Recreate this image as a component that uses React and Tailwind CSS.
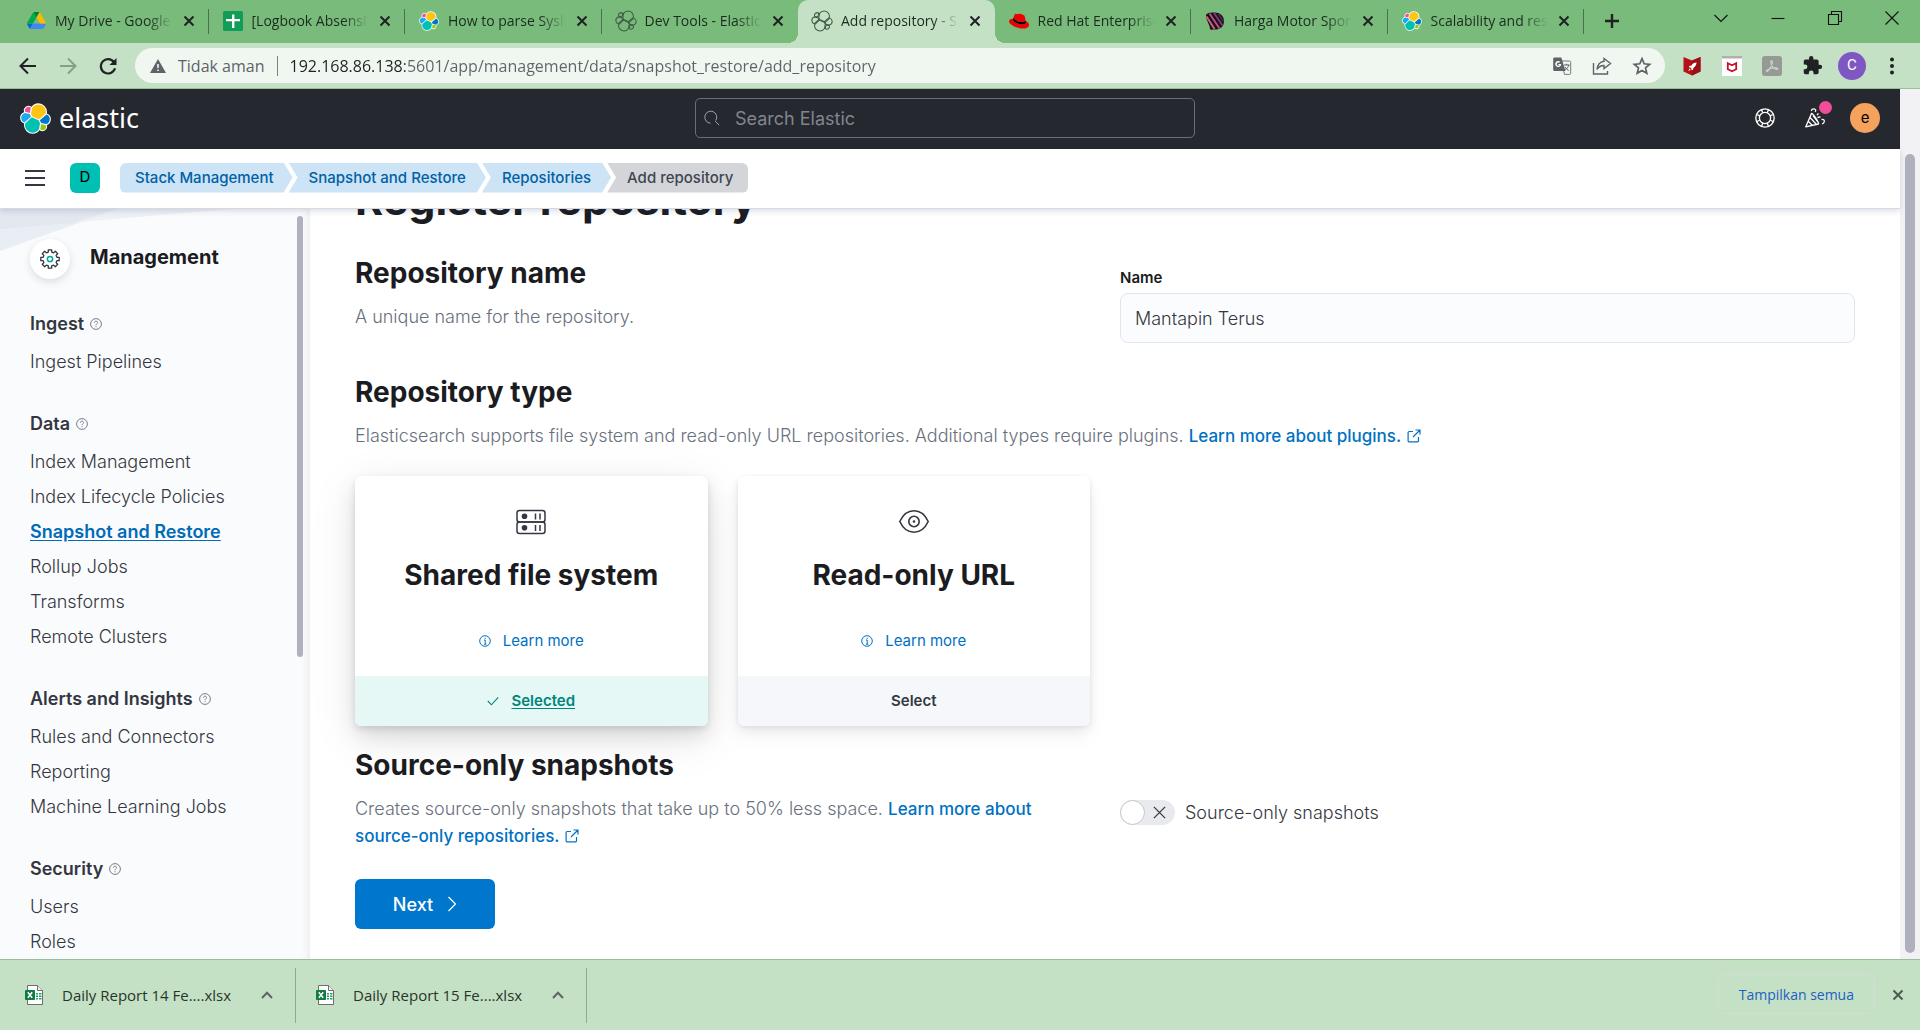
import React, { useState } from "react";

const ELASTIC_PARTS = [
  ["#FEC514", "M12.58 13.787l7.002 3.211 7.066-6.213a7.849 7.849 0 00.152-1.557c0-4.287-3.464-7.75-7.732-7.75a7.944 7.944 0 00-6.56 3.488l-1.176 6.08 1.248 2.741z"],
  ["#00BFB3", "M5.333 21.214c-.1.52-.15 1.048-.15 1.577 0 4.3 3.485 7.79 7.77 7.79a7.72 7.72 0 006.6-3.6l1.166-6.1-1.556-2.98-7.03-3.215-6.8 6.528z"],
  ["#F04E98", "M5.288 9.067l4.8 1.137L11.14 4.73a3.79 3.79 0 00-5.852 4.337z"],
  ["#1BA9F5", "M4.872 10.214C2.728 10.93 1.23 12.999 1.23 15.276c0 2.193 1.35 4.15 3.374 4.925l6.735-6.104-1.237-2.653-5.23-1.23z"],
  ["#93C90E", "M20.873 27.17a3.746 3.746 0 002.285.784 3.78 3.78 0 003.776-3.784 3.8 3.8 0 00-.218-1.27l-4.796-1.126-1.047 5.396z"],
  ["#07C", "M21.848 20.563l5.28 1.238c2.145-.712 3.643-2.782 3.643-5.06a5.28 5.28 0 00-3.384-4.915l-6.907 6.068 1.368 2.669z"],
];

function ElasticLogo({ className, outline = false }) {
  return (
    <svg viewBox="0 0 32 32" className={className} aria-hidden="true">
      {!outline &&
        ELASTIC_PARTS.map(([c, d]) => (
          <path key={c} d={d} fill="#fff" stroke="#fff" strokeWidth="2.2" strokeLinejoin="round" />
        ))}
      {ELASTIC_PARTS.map(([c, d]) => (
        <path
          key={c}
          d={d}
          fill={outline ? "none" : c}
          stroke={outline ? "#3f5a44" : "none"}
          strokeWidth="1.5"
          strokeLinejoin="round"
        />
      ))}
    </svg>
  );
}

function DriveIcon() {
  return (
    <svg viewBox="0 0 87.3 78" className="w-[19px]" aria-hidden="true">
      <path d="m6.6 66.85 3.85 6.65c.8 1.4 1.95 2.5 3.3 3.3l13.75-23.8h-27.5c0 1.55.4 3.1 1.2 4.5z" fill="#0066da" />
      <path d="m43.65 25-13.75-23.8c-1.35.8-2.5 1.9-3.3 3.3l-25.4 44a9.06 9.06 0 0 0-1.2 4.5h27.5z" fill="#00ac47" />
      <path d="m73.55 76.8c1.35-.8 2.5-1.9 3.3-3.3l1.6-2.75 7.65-13.25c.8-1.4 1.2-2.95 1.2-4.5h-27.5l5.85 11.5z" fill="#4285f4" />
      <path d="m43.65 25 13.75-23.8c-1.35-.8-2.9-1.2-4.5-1.2h-18.5c-1.6 0-3.15.45-4.5 1.2z" fill="#00832d" />
      <path d="m59.8 53h-32.3l-13.75 23.8c1.35.8 2.9 1.2 4.5 1.2h50.8c1.6 0 3.15-.45 4.5-1.2z" fill="#4285f4" />
      <path d="m73.4 26.5-12.7-22c-.8-1.4-1.95-2.5-3.3-3.3l-13.75 23.8 16.15 28h27.45c0-1.55-.4-3.1-1.2-4.5z" fill="#ffba00" />
    </svg>
  );
}

function SheetsIcon() {
  return (
    <svg viewBox="0 0 20 20" className="size-5" aria-hidden="true">
      <rect width="20" height="20" rx="1.5" fill="#0f9d58" />
      <path d="M9 3.5h2.4V8H17v2.2h-5.6V17H9v-6.800H3V8h6z" fill="#fff" />
    </svg>
  );
}

function RedHatIcon() {
  return (
    <svg viewBox="0 0 24 24" className="size-5" aria-hidden="true">
      <path
        fill="#e00"
        d="M16.009 13.386c1.577 0 3.860-.326 3.860-2.202a1.765 1.765 0 0 0-.040-.431l-.940-4.080c-.216-.898-.406-1.305-1.982-2.093-1.223-.625-3.888-1.658-4.676-1.658-.733 0-.947.946-1.822.946-.842 0-1.467-.706-2.255-.706-.757 0-1.250.515-1.630 1.576 0 0-1.060 2.990-1.197 3.424a.81.810 0 0 0-.028.245c0 1.162 4.577 4.974 10.710 4.974m4.101-1.435c.218 1.032.218 1.140.218 1.277 0 1.765-1.984 2.745-4.593 2.745-5.895.004-11.060-3.451-11.060-5.734a2.326 2.326 0 0 1 .190-.925C2.746 9.415 0 9.794 0 12.217c0 3.969 9.405 8.861 16.851 8.861 5.710 0 7.149-2.582 7.149-4.620 0-1.605-1.387-3.425-3.887-4.512"
      />
      <path fill="#000" d="M20.110 11.951c.218 1.032.218 1.140.218 1.277 0 1.765-1.984 2.745-4.593 2.745-5.895.004-11.060-3.451-11.060-5.734a2.326 2.326 0 0 1 .190-.925l.462-1.152c0 1.408 4.577 5.220 10.680 5.220 1.577 0 3.860-.326 3.860-2.202z" />
    </svg>
  );
}

function StripeBallIcon() {
  return (
    <svg viewBox="0 0 20 20" className="size-5" aria-hidden="true">
      <path d="M1 5c0-3 3-3.600 8-3.600 6 0 10 3 10 8.600s-4 8.600-9 8.600C8 18.600 5 19 5 18 5 14 1 9 1 5z" fill="#1d0d1c" />
      <g fill="none" strokeWidth="2">
        <path d="M1.500 5.500l8 12.500" stroke="#c7657a" />
        <path d="M4.500 2.500l10 15" stroke="#b5537c" />
        <path d="M9 2l8.500 12.500" stroke="#7a3d77" />
        <path d="M13.500 3l5 7.500" stroke="#4c2a58" strokeWidth="1.500" />
      </g>
    </svg>
  );
}

const TABS = [
  { title: "My Drive - Google Drive", icon: <DriveIcon />, sep: true },
  { title: "[Logbook Absensi] Magang", icon: <SheetsIcon />, sep: true },
  { title: "How to parse Syslog", icon: <ElasticLogo className="size-5" />, sep: true },
  { title: "Dev Tools - Elastic Stack", icon: <ElasticLogo outline className="size-[22px]" /> },
  { title: "Add repository - Snapshot", icon: <ElasticLogo outline className="size-[22px]" />, active: true },
  { title: "Red Hat Enterprise Linux", icon: <RedHatIcon />, sep: true },
  { title: "Harga Motor Sport Baru", icon: <StripeBallIcon />, sep: true },
  { title: "Scalability and resilience", icon: <ElasticLogo className="size-5" />, sep: true },
];

function Cross({ className = "size-3", width = 2 }) {
  return (
    <svg viewBox="0 0 12 12" className={className} fill="none" stroke="currentColor" strokeWidth={width} aria-hidden="true">
      <path d="M1.500 1.500l9 9M10.500 1.500l-9 9" />
    </svg>
  );
}

function Tab({ tab }) {
  const active = tab.active;
  return (
    <div
      role="tab"
      aria-selected={!!active}
      className={
        "relative flex h-full min-w-0 flex-1 items-center pb-0.5 pl-[13px] pr-[14px] " +
        (active ? "rounded-t-[10px] bg-[#c5e1c5]" : "")
      }
    >
      {active && (
        <>
          <span className="absolute bottom-0 -left-2.5 size-2.5 bg-[radial-gradient(circle_at_0_0,transparent_10px,#c5e1c5_10px)]" />
          <span className="absolute bottom-0 -right-2.5 size-2.5 bg-[radial-gradient(circle_at_100%_0,transparent_10px,#c5e1c5_10px)]" />
        </>
      )}
      <span className="flex w-[22px] shrink-0 justify-center">{tab.icon}</span>
      <span className="ml-2 min-w-0 flex-1 overflow-hidden whitespace-nowrap text-[14px] leading-5 text-[#1c2b21] [mask-image:linear-gradient(to_right,black_78%,transparent)]">
        {tab.title}
      </span>
      <button type="button" aria-label={"Tutup " + tab.title} className="ml-2.5 shrink-0 text-[#202124]">
        <Cross />
      </button>
      {tab.sep && <span className="absolute right-0 top-[9px] h-[25px] w-px bg-[#4b7050]" />}
    </div>
  );
}

function TabStrip() {
  return (
    <div className="flex h-[43px] shrink-0 items-stretch bg-[#79bb7b] pl-3">
      <div role="tablist" className="flex w-full max-w-[1572px] min-w-0">
        {TABS.map((t) => (
          <Tab key={t.title} tab={t} />
        ))}
      </div>
      <button type="button" aria-label="Tab baru" className="ml-5 shrink-0 pb-0.5 text-[#202124]">
        <svg viewBox="0 0 16 16" className="size-4" fill="none" stroke="currentColor" strokeWidth="2.400" aria-hidden="true">
          <path d="M8 1v14M1 8h14" />
        </svg>
      </button>
      <div className="ml-auto flex h-[36px] shrink-0 text-[#111]">
        {[
          ["Cari tab", "M1.500 5l6.500 6.500L14.500 5"],
          ["Perkecil", "M1.500 8.500h13"],
          ["Pulihkan", "M1.500 4.500h10v10h-10zM4.500 4.500v-3h10v10h-3"],
          ["Tutup", "M1.500 1.500l13 13M14.500 1.500l-13 13"],
        ].map(([label, d]) => (
          <button key={label} type="button" aria-label={label} className="flex w-[57px] items-center justify-center">
            <svg viewBox="0 0 16 16" className="size-4" fill="none" stroke="currentColor" strokeWidth="1.100" aria-hidden="true">
              <path d={d} />
            </svg>
          </button>
        ))}
      </div>
    </div>
  );
}

function ToolButton({ label, children, className = "text-[#202124]" }) {
  return (
    <button type="button" aria-label={label} className={"flex h-9 w-10 shrink-0 items-center justify-center " + className}>
      {children}
    </button>
  );
}

function AddressBar() {
  return (
    <div className="flex h-[46px] shrink-0 items-center border-b border-[#9dbb9d] bg-[#c5e1c5] px-2">
      <ToolButton label="Kembali">
        <svg viewBox="0 0 18 18" className="size-[18px]" fill="none" stroke="currentColor" strokeWidth="2" aria-hidden="true">
          <path d="M17 9H2M9 1.500L1.500 9 9 16.500" />
        </svg>
      </ToolButton>
      <ToolButton label="Maju" className="text-[#86a088]">
        <svg viewBox="0 0 18 18" className="size-[18px]" fill="none" stroke="currentColor" strokeWidth="2" aria-hidden="true">
          <path d="M1 9h15M9 1.500L16.500 9 9 16.500" />
        </svg>
      </ToolButton>
      <ToolButton label="Muat ulang">
        <svg viewBox="0 0 18 18" className="size-[18px]" aria-hidden="true">
          <path d="M15.200 5.500A7.200 7.200 0 1 0 16 11.200" fill="none" stroke="currentColor" strokeWidth="2.200" />
          <path d="M17.500 1v7h-7z" fill="currentColor" />
        </svg>
      </ToolButton>

      <div className="ml-[7px] flex h-[35px] min-w-0 flex-1 items-center rounded-full bg-[#f0f7f0] pl-[15px] pr-[13px] text-[#5f6368]">
        <svg viewBox="0 0 16 14" className="w-4 shrink-0" aria-hidden="true">
          <path d="M8 0l8 14H0z" fill="currentColor" />
          <path d="M7.200 5h1.600v4H7.200zM7.200 10.400h1.600V12H7.200z" fill="#f0f7f0" />
        </svg>
        <span className="ml-3 shrink-0 text-[16px] leading-6">Tidak aman</span>
        <span className="ml-3 h-5 w-px shrink-0 bg-[#7a837b]" />
        <input
          type="text"
          aria-label="Bilah alamat"
          defaultValue="192.168.86.138:5601/app/management/data/snapshot_restore/add_repository"
          className="ml-3 min-w-0 flex-1 bg-[linear-gradient(90deg,#202124_115px,#5f6368_115px)] bg-clip-text text-[16px] leading-6 text-transparent outline-none"
        />
        <div className="flex shrink-0 items-center gap-5">
          <button type="button" aria-label="Terjemahkan">
            <svg viewBox="0 0 20 20" className="size-5" aria-hidden="true">
              <path d="M9 5h8.500a1.200 1.200 0 0 1 1.200 1.200v11a1.200 1.200 0 0 1-1.200 1.200h-5L9 5z" fill="none" stroke="#747a7d" strokeWidth="1" />
              <path d="M2.500 1.500h6.800L13.500 15H2.500A1.300 1.300 0 0 1 1.200 13.700V2.800a1.300 1.300 0 0 1 1.300-1.300z" fill="#5f6368" />
              <path d="M9.200 8H6.400v1.200h1.400A1.700 1.700 0 1 1 7.300 6.700l.9-.9A3 3 0 1 0 9.200 8z" fill="#fff" />
              <path d="M12 9h5.500M14.700 7.800V9M16.800 9c-.5 2.200-2 3.800-3.600 4.800M13 11c.8 1.600 2.200 2.800 3.800 3.600" stroke="#5f6368" fill="none" strokeWidth="1" />
            </svg>
          </button>
          <button type="button" aria-label="Bagikan">
            <svg viewBox="0 0 20 20" className="size-5" fill="none" stroke="currentColor" strokeWidth="1.400" aria-hidden="true">
              <path d="M1.500 7v11h14v-3M12 2.500l6.500 5-6.500 5v-3C8.500 9.500 6.500 11 5 13.500c.5-4.500 3-7.600 7-8.200z" />
            </svg>
          </button>
          <button type="button" aria-label="Bookmark">
            <svg viewBox="0 0 20 20" className="size-5" fill="none" stroke="currentColor" strokeWidth="1.700" aria-hidden="true">
              <path d="M10 2.700l2.200 5.100 5.500.5-4.200 3.600 1.300 5.400L10 14.400l-4.800 2.900 1.300-5.400L2.300 8.300l5.500-.5z" />
            </svg>
          </button>
        </div>
      </div>

      <div className="ml-[7px] flex shrink-0 items-center">
        <ToolButton label="McAfee WebAdvisor">
          <svg viewBox="0 0 18 20" className="h-5 w-[18px]" aria-hidden="true">
            <path d="M.5 1L9 4.500 17.500 1v14.500L9 19.500.5 15.500z" fill="#b31217" />
            <path d="M9 4.500L17.500 1v14.500L9 19.500z" fill="#9c0f14" />
            <path d="M13.500 6.500c-2.500 0-4 1-5 3L6.300 10l-.5 1.300 1.500.2 1.200 1.200.2 1.500 1.300-.5.5-2c1.900-1.200 3-3 3-5.200zM6.500 12.500L5.300 15l2.500-1.200z" fill="#fff" />
          </svg>
        </ToolButton>
        <ToolButton label="McAfee">
          <svg viewBox="0 0 20 20" className="size-5" aria-hidden="true">
            <path d="M0 0h20v20H0z" fill="#fff" />
            <path d="M0 0h20v2.500H0z" fill="#b3aeb0" />
            <path d="M5.800 7.200L10 9.200l4.200-2v6L10 15.200l-4.200-2z" fill="none" stroke="#c8102e" strokeWidth="1.800" />
          </svg>
        </ToolButton>
        <ToolButton label="Adobe Acrobat">
          <svg viewBox="0 0 20 20" className="size-5" aria-hidden="true">
            <rect width="20" height="20" rx="3" fill="#959a95" />
            <path d="M9.500 4.500c1.500 0 .8 3.500-.8 6.500s-3.200 5-4.200 4.400c-.8-.8 2-2.600 5.500-3.200s6-.3 5.800.7-3 .2-5-2-2.700-6.400-1.300-6.400z" fill="none" stroke="#c5d3c5" strokeWidth="1.200" />
          </svg>
        </ToolButton>
        <ToolButton label="Ekstensi">
          <svg viewBox="0 0 24 24" className="size-[21px]" fill="currentColor" aria-hidden="true">
            <path d="M20.500 11H19V7c0-1.100-.9-2-2-2h-4V3.500a2.500 2.500 0 0 0-5 0V5H4c-1.100 0-2 .9-2 2v3.800h1.500a2.700 2.700 0 0 1 0 5.400H2V20c0 1.100.9 2 2 2h3.800v-1.500a2.700 2.700 0 0 1 5.400 0V22H17c1.100 0 2-.9 2-2v-4h1.500a2.500 2.500 0 0 0 0-5z" />
          </svg>
        </ToolButton>
        <ToolButton label="Profil">
          <span className="flex size-7 items-center justify-center rounded-full bg-[#7e57c2] font-[Roboto,sans-serif] text-[15px] text-white">C</span>
        </ToolButton>
        <ToolButton label="Menu">
          <svg viewBox="0 0 4 18" className="h-[18px] w-1" fill="currentColor" aria-hidden="true">
            <circle cx="2" cy="2.500" r="2" />
            <circle cx="2" cy="9" r="2" />
            <circle cx="2" cy="15.500" r="2" />
          </svg>
        </ToolButton>
      </div>
    </div>
  );
}

function GlobalHeader() {
  return (
    <header className="grid h-[60px] shrink-0 grid-cols-[1fr_500px_1fr] items-center bg-[#25282f] pb-0.5 pl-5 pr-[30px]">
      <div className="flex">
        <a href="#home" className="flex items-center gap-2 text-white">
          <ElasticLogo className="size-[31px]" />
          <span className="font-['Noto_Sans','Open_Sans',sans-serif] text-[27px] leading-8">elastic</span>
        </a>
      </div>
      <div className="relative">
        <svg viewBox="0 0 16 16" className="pointer-events-none absolute left-[9px] top-3 size-4 text-[#98a2b3]" fill="none" stroke="currentColor" aria-hidden="true">
          <path d="M6.500 13.200A6 6 0 1 1 11.800 10.500M11.200 11.200l4 4" />
        </svg>
        <input
          type="search"
          aria-label="Search Elastic"
          placeholder="Search Elastic"
          className="h-10 w-full rounded-[5px] border border-[#6b6e74] bg-transparent pl-[39px] pr-3 text-[18px] text-white outline-none placeholder:text-[#81858f]"
        />
      </div>
      <div className="-mr-2.5 flex items-center justify-end">
        <button type="button" aria-label="Help menu" className="text-white">
          <svg viewBox="0 0 20 20" className="size-5" fill="none" stroke="currentColor" strokeWidth="1.300" aria-hidden="true">
            <circle cx="10" cy="10" r="9.200" />
            <circle cx="10" cy="10" r="5.600" />
            <path d="M6.500 1.500l1.200 3.200M13.500 1.500l-1.200 3.200M6.500 18.500l1.200-3.200M13.500 18.500l-1.200-3.200M1.500 6.500l3.200 1.200M1.500 13.500l3.200-1.200M18.500 6.500l-3.200 1.200M18.500 13.500l-3.200-1.200" />
          </svg>
        </button>
        <button type="button" aria-label="Newsfeed menu" className="relative ml-[30px] text-white">
          <svg viewBox="0 0 20 20" className="size-5" fill="none" stroke="currentColor" strokeWidth="1.300" strokeLinejoin="round" aria-hidden="true">
            <path d="M6.500 5.500L.8 18.800 13.500 16c1.200-.6-6-11.500-7-10.500zM5 9.500l6.500 7M3.500 13.500l4 4M8 7.500l5 6.500" />
            <path d="M6.500 3c0-1.500 1-2.300 2.500-2.200s2.200 1.500 1.200 3M12 7l1.500-1.500M12.500 9.500l3-.6M16.500 11.500c1.800-.4 3 .4 2.800 2s-1.300 2.200-2.300 2.500" />
          </svg>
          <span className="absolute -right-[7px] -top-[7px] size-[13px] rounded-full bg-[#f04e98]" />
        </button>
        <button type="button" aria-label="Account menu" className="ml-[25px] flex size-[30px] items-center justify-center rounded-full bg-[#f5a35c] text-[15px] text-black">
          e
        </button>
      </div>
    </header>
  );
}

function Breadcrumb({ label, first, last }) {
  const base = "flex h-[30px] items-center text-[15px] leading-5 font-medium ";
  if (last) {
    return (
      <li className="-ml-1">
        <span aria-current="page" className={base + "rounded-r-md bg-[#d3d5d9] pl-5 pr-[15px] text-[#404552] [clip-path:polygon(0_0,100%_0,100%_100%,0_100%,9px_50%)]"}>
          {label}
        </span>
      </li>
    );
  }
  return (
    <li className={first ? "" : "-ml-1"}>
      <a
        href={"#" + label.toLowerCase().replace(/ /g, "-")}
        className={
          base +
          "bg-[#cce4f5] text-[#0061a6] " +
          (first
            ? "rounded-l-md pl-[15px] pr-[19px] [clip-path:polygon(0_0,calc(100%-9px)_0,100%_50%,calc(100%-9px)_100%,0_100%)]"
            : "pl-5 pr-5 [clip-path:polygon(0_0,calc(100%-9px)_0,100%_50%,calc(100%-9px)_100%,0_100%,9px_50%)]")
        }
      >
        {label}
      </a>
    </li>
  );
}

function SubHeader() {
  return (
    <div className="relative z-10 flex h-[60px] shrink-0 items-center border-b border-[#d3dae6] bg-white pb-0.5 pl-[25px] shadow-[0_2px_6px_rgba(60,70,100,0.18)]">
      <button type="button" aria-label="Toggle primary navigation" className="flex w-5 flex-col gap-[5px]">
        <span className="h-[2px] bg-[#343741]" />
        <span className="h-[2px] bg-[#343741]" />
        <span className="h-[2px] bg-[#343741]" />
      </button>
      <button type="button" aria-label="Spaces menu" className="ml-[25px] flex size-[30px] items-center justify-center rounded-md bg-[#00bfb3] text-[15px] text-black">
        D
      </button>
      <nav aria-label="Breadcrumbs" className="ml-5">
        <ol className="flex">
          <Breadcrumb label="Stack Management" first />
          <Breadcrumb label="Snapshot and Restore" />
          <Breadcrumb label="Repositories" />
          <Breadcrumb label="Add repository" last />
        </ol>
      </nav>
    </div>
  );
}

const NAV = [
  { title: "Ingest", items: ["Ingest Pipelines"] },
  {
    title: "Data",
    items: ["Index Management", "Index Lifecycle Policies", "Snapshot and Restore", "Rollup Jobs", "Transforms", "Remote Clusters"],
  },
  { title: "Alerts and Insights", items: ["Rules and Connectors", "Reporting", "Machine Learning Jobs"] },
  { title: "Security", items: ["Users", "Roles"] },
];

function QuestionIcon() {
  return (
    <svg viewBox="0 0 12 12" className="size-3" fill="none" stroke="#69707d" strokeWidth="0.900" aria-hidden="true">
      <circle cx="6" cy="6" r="5.400" />
      <path d="M4.400 4.800c0-1 .7-1.600 1.600-1.600s1.600.6 1.600 1.400C7.600 5.800 6 5.800 6 7.200M6 8.200v1" />
    </svg>
  );
}

function Sidebar() {
  return (
    <aside className="relative w-[310px] shrink-0 overflow-hidden bg-[#fafbfd] pl-[30px] shadow-[inset_-8px_0_8px_-6px_rgba(0,0,0,0.07)]">
      <svg viewBox="0 0 310 44" className="absolute left-0 top-0 w-[310px]" aria-hidden="true">
        <path d="M0 0h230L0 20z" fill="#eef1f6" />
        <path d="M0 0h118L0 42z" fill="#e9edf4" />
        <path d="M0 0h116L72 14 0 20z" fill="#e2e7f0" />
      </svg>
      <span className="absolute right-[7px] top-[7px] h-[441px] w-1.5 rounded-full bg-[#afb2be]" />
      <div className="relative flex items-start pt-[30px]">
        <span className="flex size-10 items-center justify-center rounded-full bg-white shadow-[0_3px_8px_rgba(0,0,0,0.12)]">
          <svg viewBox="0 0 20 20" className="size-5" fill="none" strokeWidth="1.300" strokeLinejoin="round" aria-hidden="true">
            <path
              stroke="#343741"
              d="M8.300.8h3.400v2.300l1.900.8 1.700-1.600 2.400 2.400-1.600 1.700.8 1.900h2.300v3.400h-2.300l-.8 1.900 1.600 1.700-2.400 2.400-1.700-1.600-1.900.8v2.300H8.300v-2.300l-1.900-.8-1.700 1.600-2.400-2.400 1.600-1.700-.8-1.900H.8V8.300h2.300l.8-1.900-1.600-1.700 2.400-2.400 1.700 1.600 1.900-.8z"
            />
            <circle cx="10" cy="10" r="2.600" stroke="#00a69b" strokeWidth="1.500" />
          </svg>
        </span>
        <h2 className="ml-5 pt-1.5 text-[20px] leading-6 font-bold text-[#1a1c21]">Management</h2>
      </div>
      <nav aria-label="Management" className="pt-[27px]">
        {NAV.map((group) => (
          <section key={group.title} className="mb-[27px]">
            <h3 className="mb-[3px] flex h-[35px] items-center gap-1.5 text-[18px] font-semibold text-[#343741]">
              {group.title}
              <QuestionIcon />
            </h3>
            <ul>
              {group.items.map((item) => (
                <li key={item} className="flex h-[35px] items-center text-[18px]">
                  <a
                    href={"#" + item.toLowerCase().replace(/ /g, "-")}
                    className={item === "Snapshot and Restore" ? "font-semibold text-[#006bb8] underline underline-offset-2" : "font-light text-[#343741]"}
                  >
                    {item}
                  </a>
                </li>
              ))}
            </ul>
          </section>
        ))}
      </nav>
    </aside>
  );
}

function PopoutIcon() {
  return (
    <svg viewBox="0 0 14 14" className="ml-1.5 inline size-[14px] align-[-1px]" fill="none" stroke="currentColor" strokeWidth="1.200" aria-hidden="true">
      <path d="M6 2.500H2.300A1.200 1.200 0 0 0 1.100 3.700v8a1.200 1.200 0 0 0 1.200 1.200h8a1.200 1.200 0 0 0 1.200-1.200V8M8.500 1H13v4.500M13 1L6 8" />
    </svg>
  );
}

function ServerIcon() {
  return (
    <svg viewBox="0 0 30 26" className="h-[26px] w-[30px]" fill="none" stroke="currentColor" strokeWidth="1.500" aria-hidden="true">
      <rect x="1" y="1.500" width="28" height="11.500" rx="2.500" />
      <rect x="1" y="13" width="28" height="11.500" rx="2.500" />
      <path d="M19.500 4.500v6M24 4.500v6M19.500 16v6M24 16v6" />
      <circle cx="8.500" cy="7.300" r="2.800" fill="currentColor" stroke="none" />
      <circle cx="8.500" cy="18.800" r="2.800" fill="currentColor" stroke="none" />
    </svg>
  );
}

function EyeIcon() {
  return (
    <svg viewBox="0 0 30 26" className="h-[26px] w-[30px]" fill="none" stroke="currentColor" strokeWidth="1.600" aria-hidden="true">
      <path d="M.8 12.500C4 5.500 9 1.800 15 1.800s11 3.700 14.200 10.700C26 19.500 21 23.200 15 23.200S4 19.500.8 12.500z" />
      <circle cx="15" cy="12.500" r="5.200" />
      <circle cx="15" cy="12.500" r="1.300" fill="currentColor" stroke="none" />
    </svg>
  );
}

function TypeCard({ title, icon, selected, onSelect }) {
  return (
    <article
      className={
        "flex flex-col overflow-hidden rounded-md bg-white " +
        (selected
          ? "shadow-[0_3px_6px_rgba(0,0,0,0.10),0_10px_20px_rgba(0,0,0,0.10),0_12px_50px_rgba(0,0,0,0.09)]"
          : "shadow-[0_1px_4px_rgba(0,0,0,0.08),0_5px_12px_rgba(0,0,0,0.06),0_12px_22px_rgba(0,0,0,0.04)]")
      }
    >
      <div className="flex h-[200px] flex-col items-center pt-[33px] text-[#343741]">
        {icon}
        <h3 className="mt-[23px] text-[28px] leading-[34px] font-bold text-[#1a1c21]">{title}</h3>
        <a href="#learn-more" className="mt-[39px] flex items-center text-[15px] leading-5 text-[#0071c2]">
          <svg viewBox="0 0 12 12" className="mr-3 size-3" fill="none" stroke="currentColor" aria-hidden="true">
            <circle cx="6" cy="6" r="5.300" />
            <path d="M5 5h1.200v4.200M5 9.200h2.500M6.200 2.800v1.100" />
          </svg>
          Learn more
        </a>
      </div>
      <button
        type="button"
        aria-pressed={selected}
        onClick={onSelect}
        className={
          "flex h-[50px] items-center justify-center text-[15px] font-semibold " +
          (selected ? "bg-[#e5f8f6] text-[#00857a]" : "bg-[#f5f7fb] text-[#343741]")
        }
      >
        {selected && (
          <svg viewBox="0 0 12 12" className="mr-3 size-3" fill="none" stroke="currentColor" strokeWidth="1.100" aria-hidden="true">
            <path d="M.8 6l3.600 3.800 6.800-7.500" />
          </svg>
        )}
        <span className={selected ? "underline underline-offset-2" : ""}>{selected ? "Selected" : "Select"}</span>
      </button>
    </article>
  );
}

function SectionTitle({ children }) {
  return <h2 className="text-[28px] leading-8 font-bold text-[#1a1c21]">{children}</h2>;
}

function Main() {
  const [type, setType] = useState("fs");
  return (
    <main className="min-w-0 flex-1 overflow-hidden bg-white px-[45px]">
      <div className="-mt-[35px]">
        <h1 className="text-[43px] leading-[50px] font-bold text-[#1a1c21]">Register repository</h1>

        <section className="mt-[33px] grid grid-cols-2 gap-[30px]">
          <div>
            <SectionTitle>Repository name</SectionTitle>
            <p className="mt-[14px] text-[18px] leading-[27px] font-light text-[#69707d]">A unique name for the repository.</p>
          </div>
          <div className="pt-[11px]">
            <label htmlFor="repo-name" className="block text-[15px] leading-5 font-semibold text-[#1a1c21]">
              Name
            </label>
            <input
              id="repo-name"
              type="text"
              defaultValue="Mantapin Terus"
              className="mt-[5px] block h-[50px] w-full rounded-lg border border-[#e0e5ee] bg-[#fbfcfd] px-[14px] text-[18px] font-light text-[#343741] outline-none"
            />
          </div>
        </section>

        <section className="mt-[33px]">
          <SectionTitle>Repository type</SectionTitle>
          <p className="mt-[14px] text-[18px] leading-[27px] font-light text-[#69707d]">
            Elasticsearch supports file system and read-only URL repositories. Additional types require plugins.{" "}
            <a href="#plugins" className="text-[17px] leading-5 font-medium text-[#0071c2]">
              Learn more about plugins.
              <PopoutIcon />
            </a>
          </p>
          <div className="mt-[27px] grid grid-cols-4 gap-[30px]">
            <TypeCard title="Shared file system" icon={<ServerIcon />} selected={type === "fs"} onSelect={() => setType("fs")} />
            <TypeCard title="Read-only URL" icon={<EyeIcon />} selected={type === "url"} onSelect={() => setType("url")} />
          </div>
        </section>

        <section className="relative mt-[23px] grid grid-cols-2 gap-[30px]">
          <div>
            <SectionTitle>Source-only snapshots</SectionTitle>
            <p className="mt-[14px] text-[18px] leading-[27px] font-light text-[#69707d]">
              Creates source-only snapshots that take up to 50% less space.{" "}
              <a href="#source-only" className="text-[17px] leading-5 font-medium text-[#0071c2]">
                Learn more about{" "}
                <span className="whitespace-nowrap">
                  source-only repositories.
                  <PopoutIcon />
                </span>
              </a>
            </p>
          </div>
          <div className="pt-[51px]">
            <label className="flex w-fit items-center gap-2.5 text-[18px] leading-[25px] font-light text-[#343741]">
              <span className="relative h-[25px] w-[55px]">
                <input type="checkbox" role="switch" className="peer block h-[25px] w-[55px] appearance-none rounded-full bg-[#e9eaee]" />
                <span className="pointer-events-none absolute left-0 top-0 size-[25px] rounded-full border border-[#c3c6cc] bg-white peer-checked:left-[30px]" />
                <Cross className="pointer-events-none absolute left-8 top-[5px] size-[15px]" width={1} />
              </span>
              Source-only snapshots
            </label>
          </div>
        </section>

        <button type="button" className="mt-[30px] flex h-[50px] w-[140px] items-center justify-center rounded-md bg-[#0077cc] text-[18px] font-medium text-white">
          Next
          <svg viewBox="0 0 10 16" className="ml-[14px] h-4 w-2.5" fill="none" stroke="currentColor" strokeWidth="1.200" aria-hidden="true">
            <path d="M1.500 1l7 7-7 7" />
          </svg>
        </button>
      </div>
    </main>
  );
}

function ExcelIcon() {
  return (
    <svg viewBox="0 0 18 20" className="h-5 w-[18px]" aria-hidden="true">
      <path d="M2.500.5h10l5 5v14h-15z" fill="#fff" stroke="#6d6d6d" />
      <path d="M12.500.5v5h5" fill="#eee" stroke="#6d6d6d" />
      <path d="M11 8h2v1.500h-2zM14 8h2.500v1.500H14zM11 10.500h2V12h-2zM14 10.500h2.500V12H14zM11 13h2v1.500h-2zM14 13h2.500v1.500H14z" fill="#21a366" />
      <rect y="5" width="10" height="10" rx="0.800" fill="#107c41" />
      <path d="M2.800 7.300l4.400 5.400M7.200 7.300l-4.400 5.400" stroke="#fff" strokeWidth="1.500" />
    </svg>
  );
}

function DownloadItem({ name }) {
  return (
    <li className="flex items-center pl-5 first:pl-[25px]">
      <button type="button" className="flex items-center text-[15px] text-[#28352a]">
        <ExcelIcon />
        <span className="ml-[19px]">{name}</span>
      </button>
      <button type="button" aria-label="Opsi unduhan" className="ml-[30px] text-[#5f6368]">
        <svg viewBox="0 0 12 8" className="w-3" fill="none" stroke="currentColor" strokeWidth="2" aria-hidden="true">
          <path d="M1 7l5-5.200L11 7" />
        </svg>
      </button>
      <span className="ml-[22px] h-[55px] w-px bg-[#8fab8f]" />
    </li>
  );
}

function DownloadBar() {
  return (
    <footer className="flex h-[71px] shrink-0 items-center border-t border-[#9dbb9d] bg-[#c5e1c5]">
      <ul className="flex">
        <DownloadItem name="Daily Report 14 Fe....xlsx" />
        <DownloadItem name="Daily Report 15 Fe....xlsx" />
      </ul>
      <button type="button" className="mb-0.5 ml-auto h-10 rounded-[5px] border border-[#d3ddd5] px-5 text-[14px] font-medium text-[#1d5fc4]">
        Tampilkan semua
      </button>
      <button type="button" aria-label="Tutup bilah unduhan" className="ml-[17px] mr-4 text-[#4d5a4f]">
        <Cross />
      </button>
    </footer>
  );
}

export default function App() {
  return (
    <div className="flex h-screen flex-col overflow-hidden font-['Open_Sans','Noto_Sans',sans-serif]">
      <TabStrip />
      <AddressBar />
      <div className="flex min-h-0 flex-1 bg-[#f2f2f5]">
        <div className="flex min-w-0 flex-1 flex-col font-['Inter',sans-serif]">
          <GlobalHeader />
          <SubHeader />
          <div className="flex min-h-0 flex-1">
            <Sidebar />
            <Main />
          </div>
        </div>
        <div className="flex w-5 shrink-0 justify-center pb-1.5 pt-[65px]">
          <span className="w-2.5 rounded-full bg-[#aeb1bd]" />
        </div>
      </div>
      <DownloadBar />
    </div>
  );
}
